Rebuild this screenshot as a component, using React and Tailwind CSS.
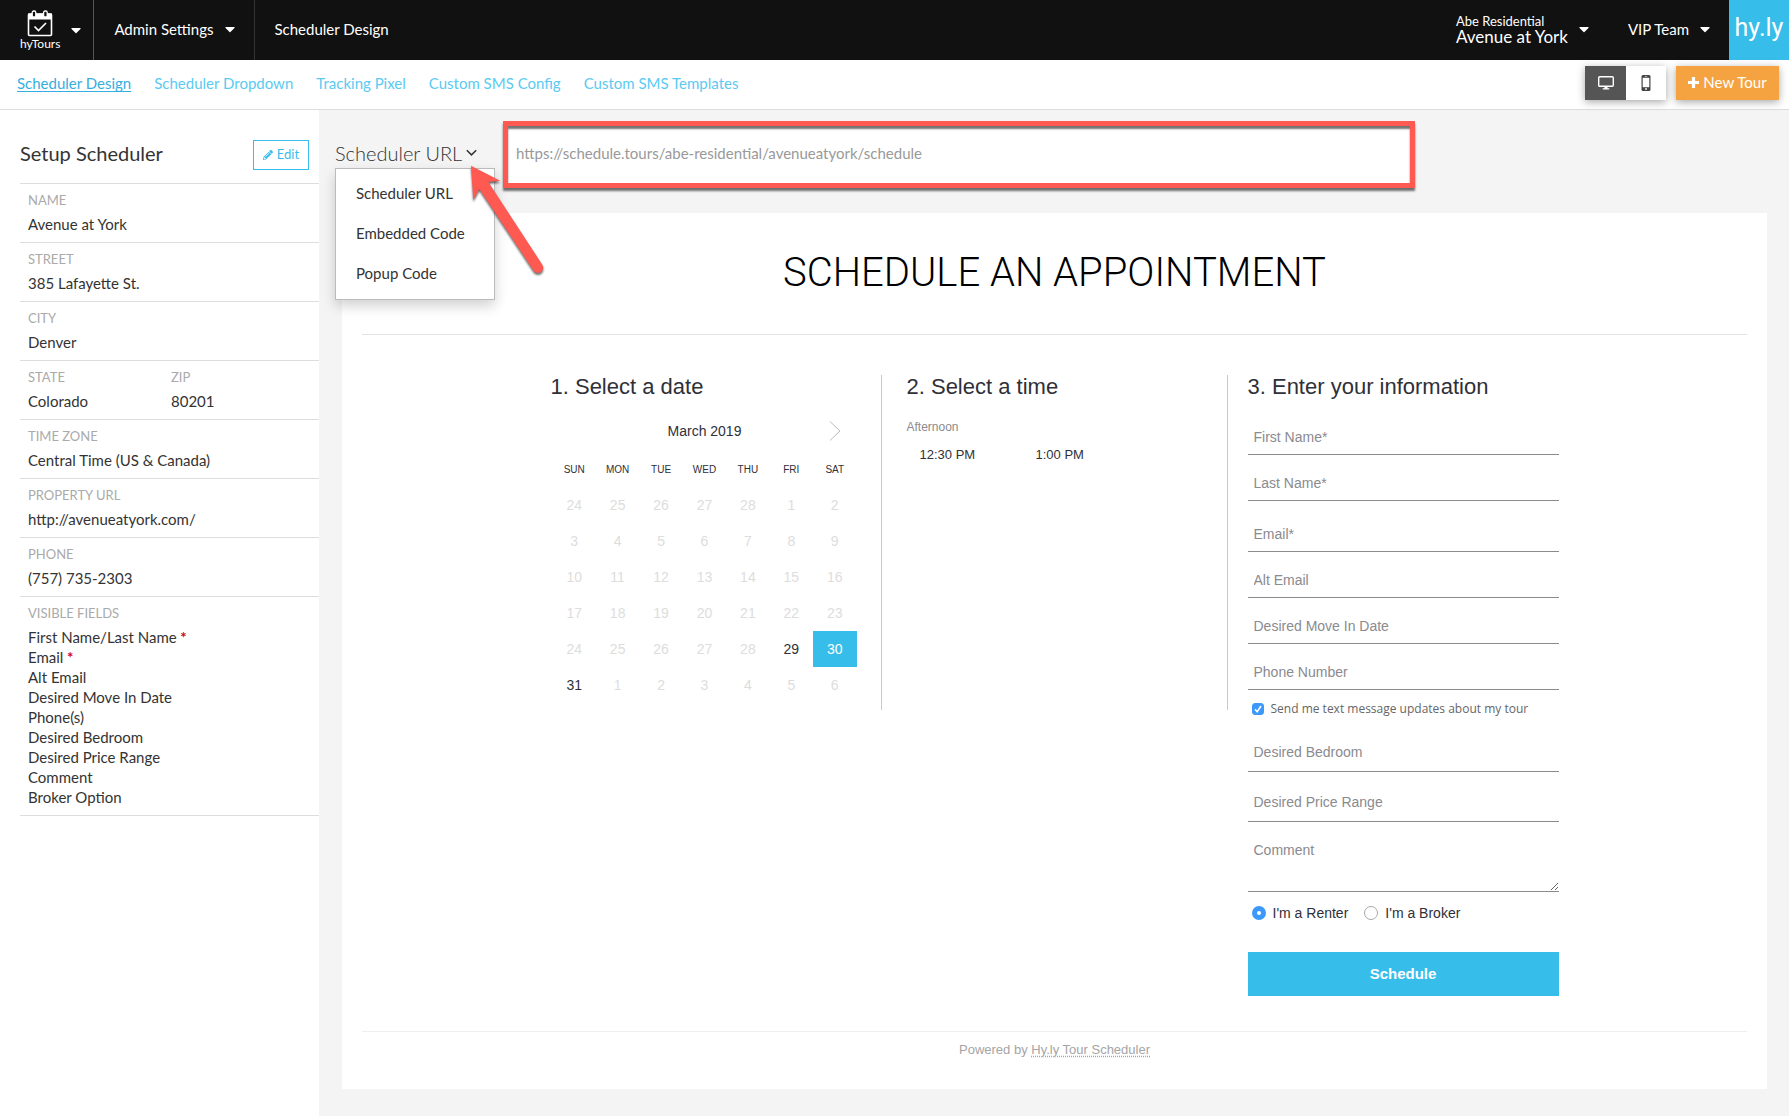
import { useState } from 'react';
import { FaCaretDown, FaPencilAlt } from 'react-icons/fa';

const NAV_LINKS = ['Scheduler Design', 'Scheduler Dropdown', 'Tracking Pixel', 'Custom SMS Config', 'Custom SMS Templates'];

const DETAILS = [
  [{ label: 'NAME', value: 'Avenue at York' }],
  [{ label: 'STREET', value: '385 Lafayette St.' }],
  [{ label: 'CITY', value: 'Denver' }],
  [{ label: 'STATE', value: 'Colorado' }, { label: 'ZIP', value: '80201' }],
  [{ label: 'TIME ZONE', value: 'Central Time (US & Canada)' }],
  [{ label: 'PROPERTY URL', value: 'http://avenueatyork.com/' }],
  [{ label: 'PHONE', value: '(757) 735-2303' }],
];

const VISIBLE_FIELDS = [
  { name: 'First Name/Last Name', required: true },
  { name: 'Email', required: true },
  { name: 'Alt Email' },
  { name: 'Desired Move In Date' },
  { name: 'Phone(s)' },
  { name: 'Desired Bedroom' },
  { name: 'Desired Price Range' },
  { name: 'Comment' },
  { name: 'Broker Option' },
];

const DAYS = ['SUN', 'MON', 'TUE', 'WED', 'THU', 'FRI', 'SAT'];
const WEEKS = [
  [24, 25, 26, 27, 28, 1, 2],
  [3, 4, 5, 6, 7, 8, 9],
  [10, 11, 12, 13, 14, 15, 16],
  [17, 18, 19, 20, 21, 22, 23],
  [24, 25, 26, 27, 28, 29, 30],
  [31, 1, 2, 3, 4, 5, 6],
];
const OPEN_DAYS = [29, 30, 31];

function CalendarIcon() {
  return (
    <svg width="26" height="27" viewBox="0 0 26 27" fill="none" aria-hidden="true">
      <rect x="1.5" y="4" width="23" height="21.5" rx="1" stroke="white" strokeWidth="1.6" />
      <path d="M1 3.5h24V9.5H1z" fill="white" />
      <rect x="5.2" y="1" width="3.6" height="6" rx="1.5" fill="#111" stroke="white" strokeWidth="1.3" />
      <rect x="16.6" y="1" width="3.6" height="6" rx="1.5" fill="#111" stroke="white" strokeWidth="1.3" />
      <path d="M7.5 16.5l4 4 7.5-7.5" stroke="white" strokeWidth="1.7" />
    </svg>
  );
}

function TopBar() {
  return (
    <header className="flex h-[60px] bg-[#111] text-[15px] text-white">
      <button className="flex items-center gap-2 border-r border-[#555] pl-5 pr-[9px]">
        <span className="flex flex-col items-center">
          <CalendarIcon />
          <span className="text-[12px] leading-[14px]">hyTours</span>
        </span>
        <FaCaretDown size={16} />
      </button>
      <button className="flex items-center gap-2 border-r border-[#333] pb-0.5 pl-5 pr-4">
        Admin Settings
        <FaCaretDown size={16} />
      </button>
      <span className="flex items-center pb-0.5 pl-5">Scheduler Design</span>
      <button className="ml-auto flex items-center gap-2 pb-0.5 pr-9 text-left">
        <span>
          <span className="block text-[13px] leading-4">Abe Residential</span>
          <span className="block text-[17px] leading-4">Avenue at York</span>
        </span>
        <FaCaretDown size={16} />
      </button>
      <button className="flex items-center gap-2 pb-0.5 pr-4">
        VIP Team
        <FaCaretDown size={16} />
      </button>
      <a href="#home" className="flex w-[60px] items-center justify-center bg-[#37bdea] pb-1 font-['Roboto',sans-serif] text-[25px] leading-8">
        hy.ly
      </a>
    </header>
  );
}

function SubNav() {
  return (
    <nav className="flex h-[50px] items-center gap-[23px] border-b border-[#ddd] bg-white pl-[17px] pr-[10px] text-[15px] text-[#5acaf2]">
      {NAV_LINKS.map((link, i) => (
        <a key={link} href="#nav" className={i === 0 ? 'pb-0.5 text-[#37aee0] underline underline-offset-2' : 'pb-0.5'}>
          {link}
        </a>
      ))}
      <div className="mb-1 ml-auto flex gap-[10px]">
        <div className="flex shadow-[0_2px_8px_rgba(0,0,0,0.35)]">
          <button aria-label="Desktop preview" className="flex h-[34px] w-[41px] items-center justify-center bg-[#555]">
            <svg width="16" height="14" viewBox="0 0 16 14" aria-hidden="true">
              <rect x="0.7" y="0.7" width="14.6" height="9.6" rx="1" fill="none" stroke="white" strokeWidth="1.4" />
              <path d="M6.5 10.5h3v1.8h1.8v1.2H4.7v-1.2h1.8z" fill="white" />
            </svg>
          </button>
          <button aria-label="Mobile preview" className="flex h-[34px] w-[40px] items-center justify-center bg-white">
            <svg width="10" height="16" viewBox="0 0 10 16" aria-hidden="true">
              <rect x="0.5" width="9" height="16" rx="1.5" fill="#444" />
              <rect x="1.7" y="2.8" width="6.6" height="9.4" fill="white" />
              <circle cx="5" cy="14" r="0.9" fill="white" />
              <path d="M3.8 1.4h2.4" stroke="white" strokeWidth="0.6" />
            </svg>
          </button>
        </div>
        <button className="flex h-[34px] w-[103px] items-center justify-center gap-1 bg-[#f5a341] text-white shadow-[0_2px_8px_rgba(0,0,0,0.35)]">
          <svg width="11" height="11" viewBox="0 0 11 11" aria-hidden="true">
            <path d="M5.5 0v11M0 5.5h11" stroke="white" strokeWidth="3.2" />
          </svg>
          New Tour
        </button>
      </div>
    </nav>
  );
}

function Sidebar() {
  return (
    <aside className="w-[319px] shrink-0 bg-white pl-5 text-[15px] text-[#333]">
      <div className="flex items-center justify-between pb-[13px] pr-[10px] pt-[30px]">
        <h2 className="pb-1 text-[20px] leading-6">Setup Scheduler</h2>
        <button className="flex h-[30px] w-14 items-center justify-center gap-1 border border-[#37bdea] text-[13px] text-[#37bdea]">
          <FaPencilAlt size={10} />
          Edit
        </button>
      </div>
      <dl>
        {DETAILS.map((row) => (
          <div key={row[0].label} className="grid grid-cols-[143px_1fr] border-t border-[#ddd] pb-2 pl-2 pt-[6px]">
            {row.map(({ label, value }) => (
              <div key={label} className="whitespace-nowrap">
                <dt className="text-[13px] leading-5 text-[#aaa]">{label}</dt>
                <dd className="mt-1 leading-5">{value}</dd>
              </div>
            ))}
          </div>
        ))}
        <div className="border-y border-[#ddd] pb-2 pl-2 pt-[6px]">
          <dt className="mb-1 text-[13px] leading-5 text-[#aaa]">VISIBLE FIELDS</dt>
          {VISIBLE_FIELDS.map(({ name, required }) => (
            <dd key={name} className="leading-5">
              {name}
              {required && <span className="font-bold text-[#d0021b]"> *</span>}
            </dd>
          ))}
        </div>
      </dl>
    </aside>
  );
}

function UrlPicker() {
  return (
    <div className="relative w-[168px] shrink-0 pb-1">
      <button className="flex items-center gap-1 text-[20px] font-light leading-6 text-[#333]">
        Scheduler URL
        <svg width="11" height="8" viewBox="0 0 11 8" fill="none" stroke="#333" strokeWidth="1.5" aria-hidden="true">
          <path d="M0.8 1.2l4.7 4.7 4.7-4.7" />
        </svg>
      </button>
      <ul className="absolute left-0 top-[27px] z-10 w-40 border border-[#bbb] bg-white pb-[6px] pt-1 text-[15px] text-[#333] shadow-[0_6px_12px_rgba(0,0,0,0.18)]">
        {['Scheduler URL', 'Embedded Code', 'Popup Code'].map((item) => (
          <li key={item}>
            <a href="#code" className="block pl-5 leading-10">{item}</a>
          </li>
        ))}
      </ul>
      <svg
        className="absolute left-[135px] top-6 z-20 drop-shadow-[0_2px_1px_rgba(0,0,0,0.6)]"
        width="75"
        height="112"
        viewBox="450 165 225 336"
        aria-hidden="true"
      >
        <path d="M453 167L541 212L505 216L667 464A15 15 0 0 1 641 482L478 237L460 270Z" fill="#ff5a52" />
      </svg>
    </div>
  );
}

function Calendar() {
  return (
    <div className="ml-[2px] mr-6 mt-5">
      <div className="grid grid-cols-7 items-center leading-6">
        <span className="col-span-3 col-start-3 text-center text-[14px]">March 2019</span>
        <button aria-label="Next month" className="col-start-7 justify-self-center">
          <svg width="12" height="20" viewBox="0 0 12 20" fill="none" stroke="#bbb" aria-hidden="true">
            <path d="M1 0.5l10 9.5-10 9.5" />
          </svg>
        </button>
      </div>
      <table className="mt-2 w-full table-fixed text-center">
        <thead>
          <tr className="h-9">
            {DAYS.map((day) => (
              <th key={day} scope="col" className="p-0 text-[10px] font-normal">{day}</th>
            ))}
          </tr>
        </thead>
        <tbody className="text-[14px]">
          {WEEKS.map((week, w) => (
            <tr key={w} className="h-9">
              {week.map((day) => {
                const open = OPEN_DAYS.includes(day);
                const selected = day === 30;
                return (
                  <td key={day} className={selected ? 'bg-[#37bdea] p-0 text-white' : open ? 'p-0' : 'p-0 text-[#ddd]'}>
                    {day}
                  </td>
                );
              })}
            </tr>
          ))}
        </tbody>
      </table>
    </div>
  );
}

const fieldClass = 'block w-full border-b border-[#8a8a8f] px-[6px] text-[14px] text-[#333] outline-none placeholder:text-[#8a8a90]';

function InfoForm() {
  const [role, setRole] = useState('renter');
  const [texts, setTexts] = useState(true);
  const radioClass = 'size-[14px] appearance-none rounded-full border border-[#aaa] bg-white checked:border-[5px] checked:border-[#3b99fc]';

  return (
    <form className="pt-[10px]" onSubmit={(e) => e.preventDefault()}>
      <input aria-label="First Name" placeholder="First Name*" className={`${fieldClass} mt-[11px] h-[35px]`} />
      <input aria-label="Last Name" placeholder="Last Name*" className={`${fieldClass} mt-[11px] h-[35px]`} />
      <input aria-label="Email" placeholder="Email*" className={`${fieldClass} mt-4 h-[35px]`} />
      <input aria-label="Alt Email" placeholder="Alt Email" className={`${fieldClass} mt-[11px] h-[35px]`} />
      <input aria-label="Desired Move In Date" placeholder="Desired Move In Date" className={`${fieldClass} mt-[11px] h-[35px]`} />
      <input aria-label="Phone Number" placeholder="Phone Number" className={`${fieldClass} mt-[11px] h-[35px]`} />
      <label className="mt-[10px] flex items-center gap-[7px] whitespace-nowrap pl-1 font-['Open_Sans',sans-serif] text-[12px] leading-[18px] text-[#666]">
        <span className="grid">
          <input
            type="checkbox"
            checked={texts}
            onChange={(e) => setTexts(e.target.checked)}
            className="col-start-1 row-start-1 size-3 appearance-none rounded-[3px] border border-[#aaa] checked:border-[#3b99fc] checked:bg-[#3b99fc]"
          />
          {texts && (
            <svg className="pointer-events-none col-start-1 row-start-1" width="12" height="12" viewBox="0 0 12 12" fill="none" stroke="white" strokeWidth="1.6" aria-hidden="true">
              <path d="M3 6.4l2.2 2.4L9 3" />
            </svg>
          )}
        </span>
        Send me text message updates about my tour
      </label>
      <input aria-label="Desired Bedroom" placeholder="Desired Bedroom" className={`${fieldClass} mt-[15px] h-[39px]`} />
      <input aria-label="Desired Price Range" placeholder="Desired Price Range" className={`${fieldClass} mt-[11px] h-[39px]`} />
      <textarea aria-label="Comment" placeholder="Comment" className={`${fieldClass} mt-[11px] h-[59px] pt-[7px] leading-5`} />
      <div className="mt-[11px] flex gap-4 pl-1 text-[14px] leading-5">
        <label className="flex items-center gap-[7px]">
          <input type="radio" name="role" checked={role === 'renter'} onChange={() => setRole('renter')} className={radioClass} />
          I'm a Renter
        </label>
        <label className="flex items-center gap-[7px]">
          <input type="radio" name="role" checked={role === 'broker'} onChange={() => setRole('broker')} className={radioClass} />
          I'm a Broker
        </label>
      </div>
      <button className="mt-[29px] h-11 w-full bg-[#37bdea] text-[15px] font-bold text-white">Schedule</button>
    </form>
  );
}

function SchedulerPreview() {
  return (
    <section className="ml-[7px] mr-[22px] mt-[25px] bg-white px-5 font-['Liberation_Sans',sans-serif] text-[#2f3038]">
      <h1 className="border-b border-[#e2e2e2] pb-[41px] pt-10 text-center font-['Roboto',sans-serif] text-[40px] font-light leading-10 text-black">
        SCHEDULE AN APPOINTMENT
      </h1>
      <div className="mx-auto grid max-w-[1008px] grid-cols-[331fr_346fr_331fr] items-start pt-10">
        <div className="min-h-[335px] border-r border-[#c8c8d0]">
          <h2 className="text-[22px] leading-6">1. Select a date</h2>
          <Calendar />
        </div>
        <div className="min-h-[335px] border-r border-[#c8c8d0] pl-[25px]">
          <h2 className="text-[22px] leading-6">2. Select a time</h2>
          <p className="mt-[18px] text-[12px] leading-5 text-[#8a8a90]">Afternoon</p>
          <div className="mt-2 grid grid-cols-[116px_116px] pl-[13px] text-[13px] leading-5">
            <button className="text-left">12:30 PM</button>
            <button className="text-left">1:00 PM</button>
          </div>
        </div>
        <div className="pl-5">
          <h2 className="text-[22px] leading-6">3. Enter your information</h2>
          <InfoForm />
        </div>
      </div>
      <footer className="mt-[35px] border-t border-[#eee] pb-[29px] pt-2 text-center text-[13px] leading-5 text-[#a5a5a5]">
        Powered by{' '}
        <a href="#hyly" className="underline decoration-dotted underline-offset-2">Hy.ly Tour Scheduler</a>
      </footer>
    </section>
  );
}

export default function App() {
  return (
    <div className="flex min-h-screen flex-col bg-[#f4f4f4] font-['Lato',sans-serif]">
      <TopBar />
      <SubNav />
      <div className="flex flex-1">
        <Sidebar />
        <main className="min-w-0 flex-1 pl-4">
          <div className="flex items-center pt-[11px]">
            <UrlPicker />
            <input
              readOnly
              aria-label="Scheduler URL"
              value="https://schedule.tours/abe-residential/avenueatyork/schedule"
              className="h-[67px] min-w-0 max-w-[912px] flex-1 border-[5px] border-[#ff5a52] bg-white px-2 pb-[3px] text-[15px] text-[#999] shadow-[0_3px_2px_rgba(0,0,0,0.55),inset_0_3px_2px_rgba(0,0,0,0.55)] outline-none"
            />
          </div>
          <SchedulerPreview />
        </main>
      </div>
    </div>
  );
}
